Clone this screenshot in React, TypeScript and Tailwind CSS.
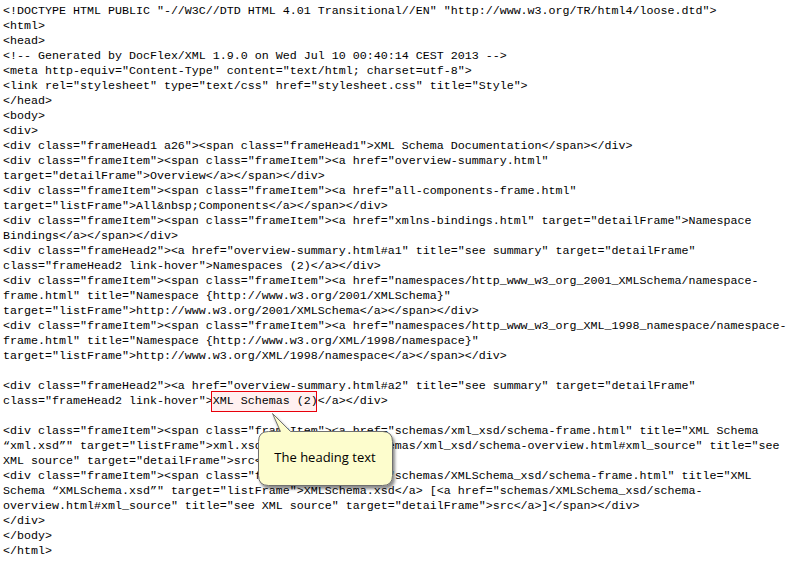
import React from "react";

const before: string[] = [
  '<!DOCTYPE HTML PUBLIC "-//W3C//DTD HTML 4.01 Transitional//EN" "http://www.w3.org/TR/html4/loose.dtd">',
  '<html>',
  '<head>',
  '<!-- Generated by DocFlex/XML 1.9.0 on Wed Jul 10 00:40:14 CEST 2013 -->',
  '<meta http-equiv="Content-Type" content="text/html; charset=utf-8">',
  '<link rel="stylesheet" type="text/css" href="stylesheet.css" title="Style">',
  '</head>',
  '<body>',
  '<div>',
  '<div class="frameHead1 a26"><span class="frameHead1">XML Schema Documentation</span></div>',
  '<div class="frameItem"><span class="frameItem"><a href="overview-summary.html"',
  'target="detailFrame">Overview</a></span></div>',
  '<div class="frameItem"><span class="frameItem"><a href="all-components-frame.html"',
  'target="listFrame">All&nbsp;Components</a></span></div>',
  '<div class="frameItem"><span class="frameItem"><a href="xmlns-bindings.html" target="detailFrame">Namespace',
  'Bindings</a></span></div>',
  '<div class="frameHead2"><a href="overview-summary.html#a1" title="see summary" target="detailFrame"',
  'class="frameHead2 link-hover">Namespaces (2)</a></div>',
  '<div class="frameItem"><span class="frameItem"><a href="namespaces/http_www_w3_org_2001_XMLSchema/namespace-',
  'frame.html" title="Namespace {http://www.w3.org/2001/XMLSchema}"',
  'target="listFrame">http://www.w3.org/2001/XMLSchema</a></span></div>',
  '<div class="frameItem"><span class="frameItem"><a href="namespaces/http_www_w3_org_XML_1998_namespace/namespace-',
  'frame.html" title="Namespace {http://www.w3.org/XML/1998/namespace}"',
  'target="listFrame">http://www.w3.org/XML/1998/namespace</a></span></div>',
  '',
  '<div class="frameHead2"><a href="overview-summary.html#a2" title="see summary" target="detailFrame"',
];

const after: string[] = [
  '',
  '<div class="frameItem"><span class="frameItem"><a href="schemas/xml_xsd/schema-frame.html" title="XML Schema',
  '\u201Cxml.xsd\u201D" target="listFrame">xml.xsd</a> [<a href="schemas/xml_xsd/schema-overview.html#xml_source" title="see',
  'XML source" target="detailFrame">src</a>]</span></div>',
  '<div class="frameItem"><span class="frameItem"><a href="schemas/XMLSchema_xsd/schema-frame.html" title="XML',
  'Schema \u201CXMLSchema.xsd\u201D" target="listFrame">XMLSchema.xsd</a> [<a href="schemas/XMLSchema_xsd/schema-',
  'overview.html#xml_source" title="see XML source" target="detailFrame">src</a>]</span></div>',
  '</div>',
  '</body>',
  '</html>',
];

function Line({ text }: { text: string }) {
  return <div className="h-[15px]">{text === "" ? "\u00A0" : text}</div>;
}

function Callout() {
  return (
    <div className="absolute left-[255px] top-[410px] w-[145px] h-[82px]">
      <svg width="145" height="82" viewBox="0 0 145 82" className="absolute left-0 top-0">
        <defs>
          <filter id="sh" x="-20%" y="-20%" width="140%" height="140%">
            <feDropShadow dx="2" dy="3" stdDeviation="1.6" floodColor="#000" floodOpacity="0.45" />
          </filter>
        </defs>
        <path
          d="M 13.5 21.5 L 25.5 21.5 L 17.5 3.5 L 35.5 21.5 L 127.5 21.5 Q 137.5 21.5 137.5 31.5 L 137.5 65.5 Q 137.5 75.5 127.5 75.5 L 13.5 75.5 Q 3.5 75.5 3.5 65.5 L 3.5 31.5 Q 3.5 21.5 13.5 21.5 Z"
          fill="#fdfdcd"
          stroke="#707070"
          strokeWidth="1"
          filter="url(#sh)"
        />
      </svg>
      <div className="absolute left-[3px] top-[21px] w-[134px] h-[54px] flex items-center justify-center font-['Open_Sans',sans-serif] text-[13px] text-black">
        The heading text
      </div>
    </div>
  );
}

export default function App() {
  return (
    <div className="relative w-[796px] h-[565px] bg-white overflow-hidden">
      <div className="pt-[4px] pl-[3px] whitespace-pre font-['Liberation_Mono',monospace] text-[11.667px] leading-[15px] text-black">
        {before.map((t, i) => (
          <Line key={"b" + i} text={t} />
        ))}
        <div className="h-[15px]">
          {'class="frameHead2 link-hover">'}
          <span className="relative inline-block">
            <span className="absolute left-[-2px] top-[-3px] w-[106px] h-[21px] border border-[#e8000b] bg-[#fff0f0]" />
            <span className="relative">XML Schemas (2)</span>
          </span>
          {'</a></div>'}
        </div>
        {after.map((t, i) => (
          <Line key={"a" + i} text={t} />
        ))}
      </div>
      <Callout />
    </div>
  );
}
